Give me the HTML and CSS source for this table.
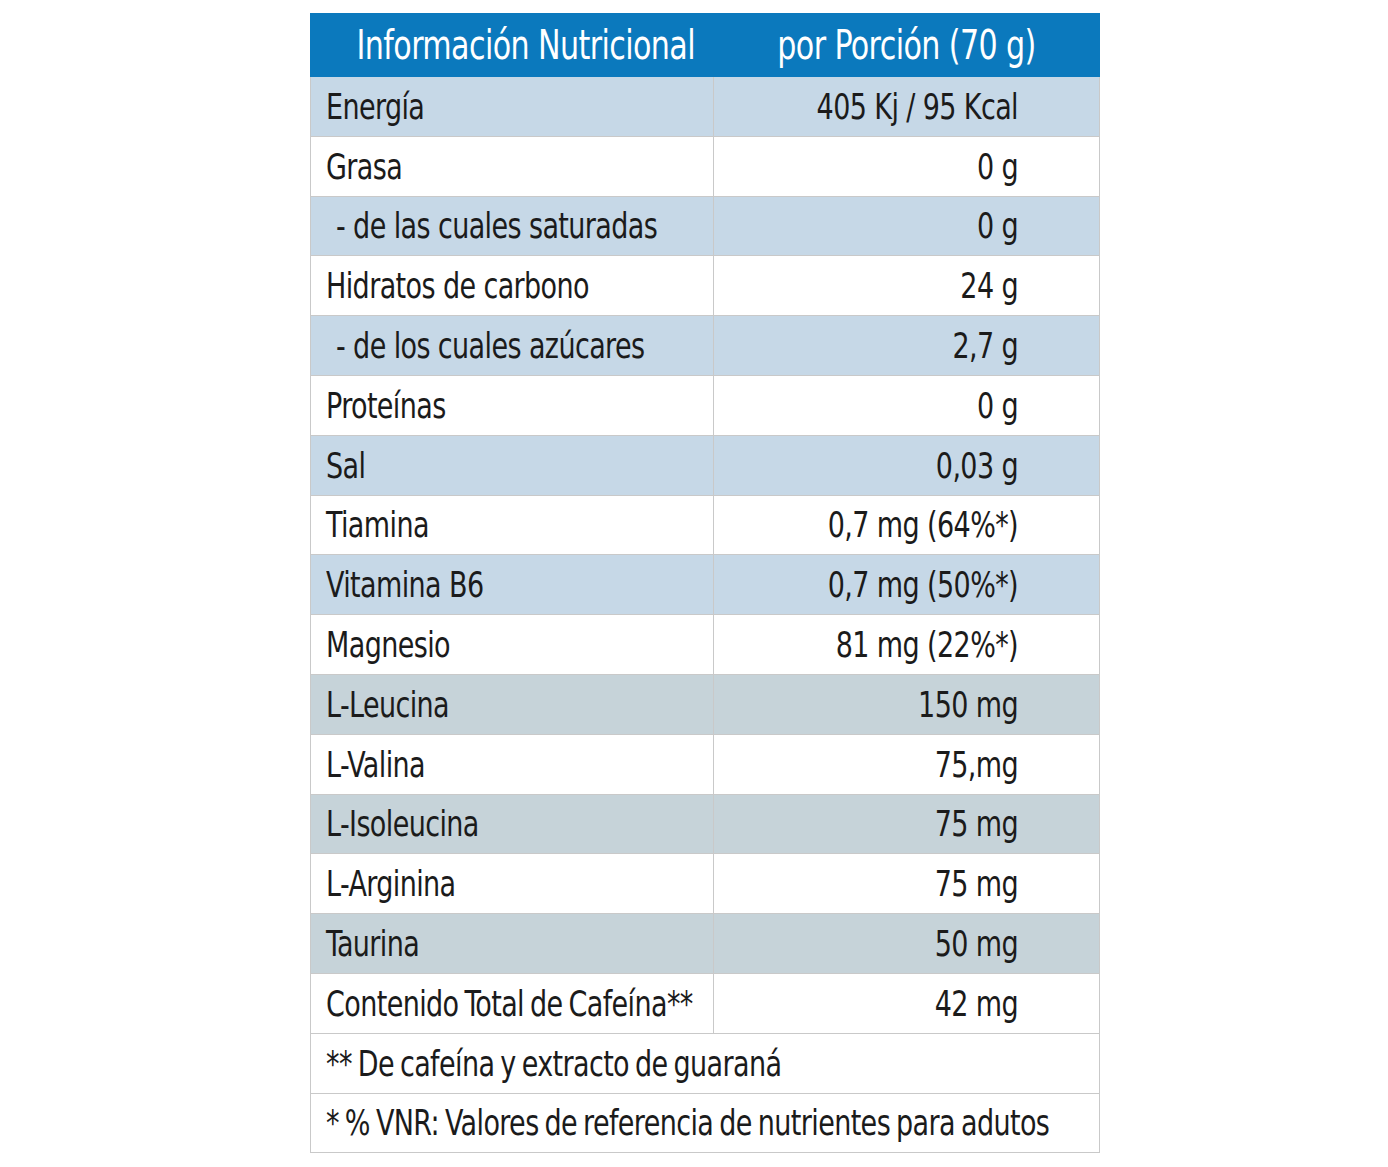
FILE: index.html
```html
<!DOCTYPE html>
<html lang="es">
<head>
<meta charset="utf-8">
<title>Información Nutricional</title>
<link rel="stylesheet" href="styles.css">
</head>
<body>
<table class="nutri">
  <colgroup>
    <col class="col-name">
    <col class="col-val">
  </colgroup>
  <thead>
    <tr class="head">
      <th class="c-name"><span class="t">Información Nutricional</span></th>
      <th class="c-val"><span class="t">por Porción (70 g)</span></th>
    </tr>
  </thead>
  <tbody>
    <tr class="blue"><td class="c-name"><span class="t">Energía</span></td><td class="c-val"><span class="t">405 Kj / 95 Kcal</span></td></tr>
    <tr><td class="c-name"><span class="t">Grasa</span></td><td class="c-val"><span class="t">0 g</span></td></tr>
    <tr class="blue"><td class="c-name sub"><span class="t">- de las cuales saturadas</span></td><td class="c-val"><span class="t">0 g</span></td></tr>
    <tr><td class="c-name"><span class="t">Hidratos de carbono</span></td><td class="c-val"><span class="t">24 g</span></td></tr>
    <tr class="blue"><td class="c-name sub"><span class="t">- de los cuales azúcares</span></td><td class="c-val"><span class="t">2,7 g</span></td></tr>
    <tr><td class="c-name"><span class="t">Proteínas</span></td><td class="c-val"><span class="t">0 g</span></td></tr>
    <tr class="blue"><td class="c-name"><span class="t">Sal</span></td><td class="c-val"><span class="t">0,03 g</span></td></tr>
    <tr><td class="c-name"><span class="t">Tiamina</span></td><td class="c-val"><span class="t">0,7 mg (64%*)</span></td></tr>
    <tr class="blue"><td class="c-name"><span class="t">Vitamina B6</span></td><td class="c-val"><span class="t">0,7 mg (50%*)</span></td></tr>
    <tr><td class="c-name"><span class="t">Magnesio</span></td><td class="c-val"><span class="t">81 mg (22%*)</span></td></tr>
    <tr class="grey"><td class="c-name"><span class="t">L-Leucina</span></td><td class="c-val"><span class="t">150 mg</span></td></tr>
    <tr><td class="c-name"><span class="t">L-Valina</span></td><td class="c-val"><span class="t">75,mg</span></td></tr>
    <tr class="grey"><td class="c-name"><span class="t">L-Isoleucina</span></td><td class="c-val"><span class="t">75 mg</span></td></tr>
    <tr><td class="c-name"><span class="t">L-Arginina</span></td><td class="c-val"><span class="t">75 mg</span></td></tr>
    <tr class="grey"><td class="c-name"><span class="t">Taurina</span></td><td class="c-val"><span class="t">50 mg</span></td></tr>
    <tr><td class="c-name tight"><span class="t">Contenido Total de Cafeína**</span></td><td class="c-val"><span class="t">42 mg</span></td></tr>
    <tr><td class="note" colspan="2"><span class="t">** De cafeína y extracto de guaraná</span></td></tr>
    <tr><td class="note" colspan="2"><span class="t">* % VNR: Valores de referencia de nutrientes para adutos</span></td></tr>
  </tbody>
</table>
</body>
</html>
```

FILE: styles.css
```css
html, body {
  margin: 0;
  padding: 0;
  background: #ffffff;
}

body {
  padding: 13px 0 0 310px;
  font-family: "DejaVu Sans Condensed", "DejaVu Sans", "Liberation Sans", sans-serif;
  color: #1b1b1b;
}

.nutri {
  border-collapse: collapse;
  width: 789px;
  table-layout: fixed;
  font-size: 30px;
  letter-spacing: -0.6px;
}

.col-name {
  width: 403px;
}

.col-val {
  width: 386px;
}

.nutri th,
.nutri td {
  border: 1px solid #c9c9c9;
  padding: 0;
  height: 58.8px;
  font-weight: normal;
  white-space: nowrap;
}

.nutri .t {
  display: inline-block;
  transform: scaleY(1.18);
  transform-origin: center 55%;
}

.nutri .c-name {
  text-align: left;
  padding-left: 15px;
}

.nutri .c-val {
  text-align: right;
  padding-right: 81px;
}

.nutri .sub {
  padding-left: 25px;
}

.nutri .tight {
  word-spacing: -2px;
}

.nutri .head th {
  background: #0b79bd;
  color: #ffffff;
  border-color: #0b79bd;
  height: 62px;
  font-size: 33.5px;
  letter-spacing: -0.6px;
}

.nutri .head .t {
  transform: scaleY(1.2);
}

.nutri .head .c-name {
  text-align: right;
  padding-right: 18px;
  padding-left: 0;
}

.nutri .head .c-val {
  text-align: center;
  padding-right: 0;
}

.nutri .head th + th {
  border-left-color: #5e8fb3;
}

.nutri .blue td {
  background: #c6d8e7;
}

.nutri .grey td {
  background: #c6d3d9;
}

.nutri .note {
  padding-left: 15px;
  text-align: left;
  word-spacing: -2px;
}
```
